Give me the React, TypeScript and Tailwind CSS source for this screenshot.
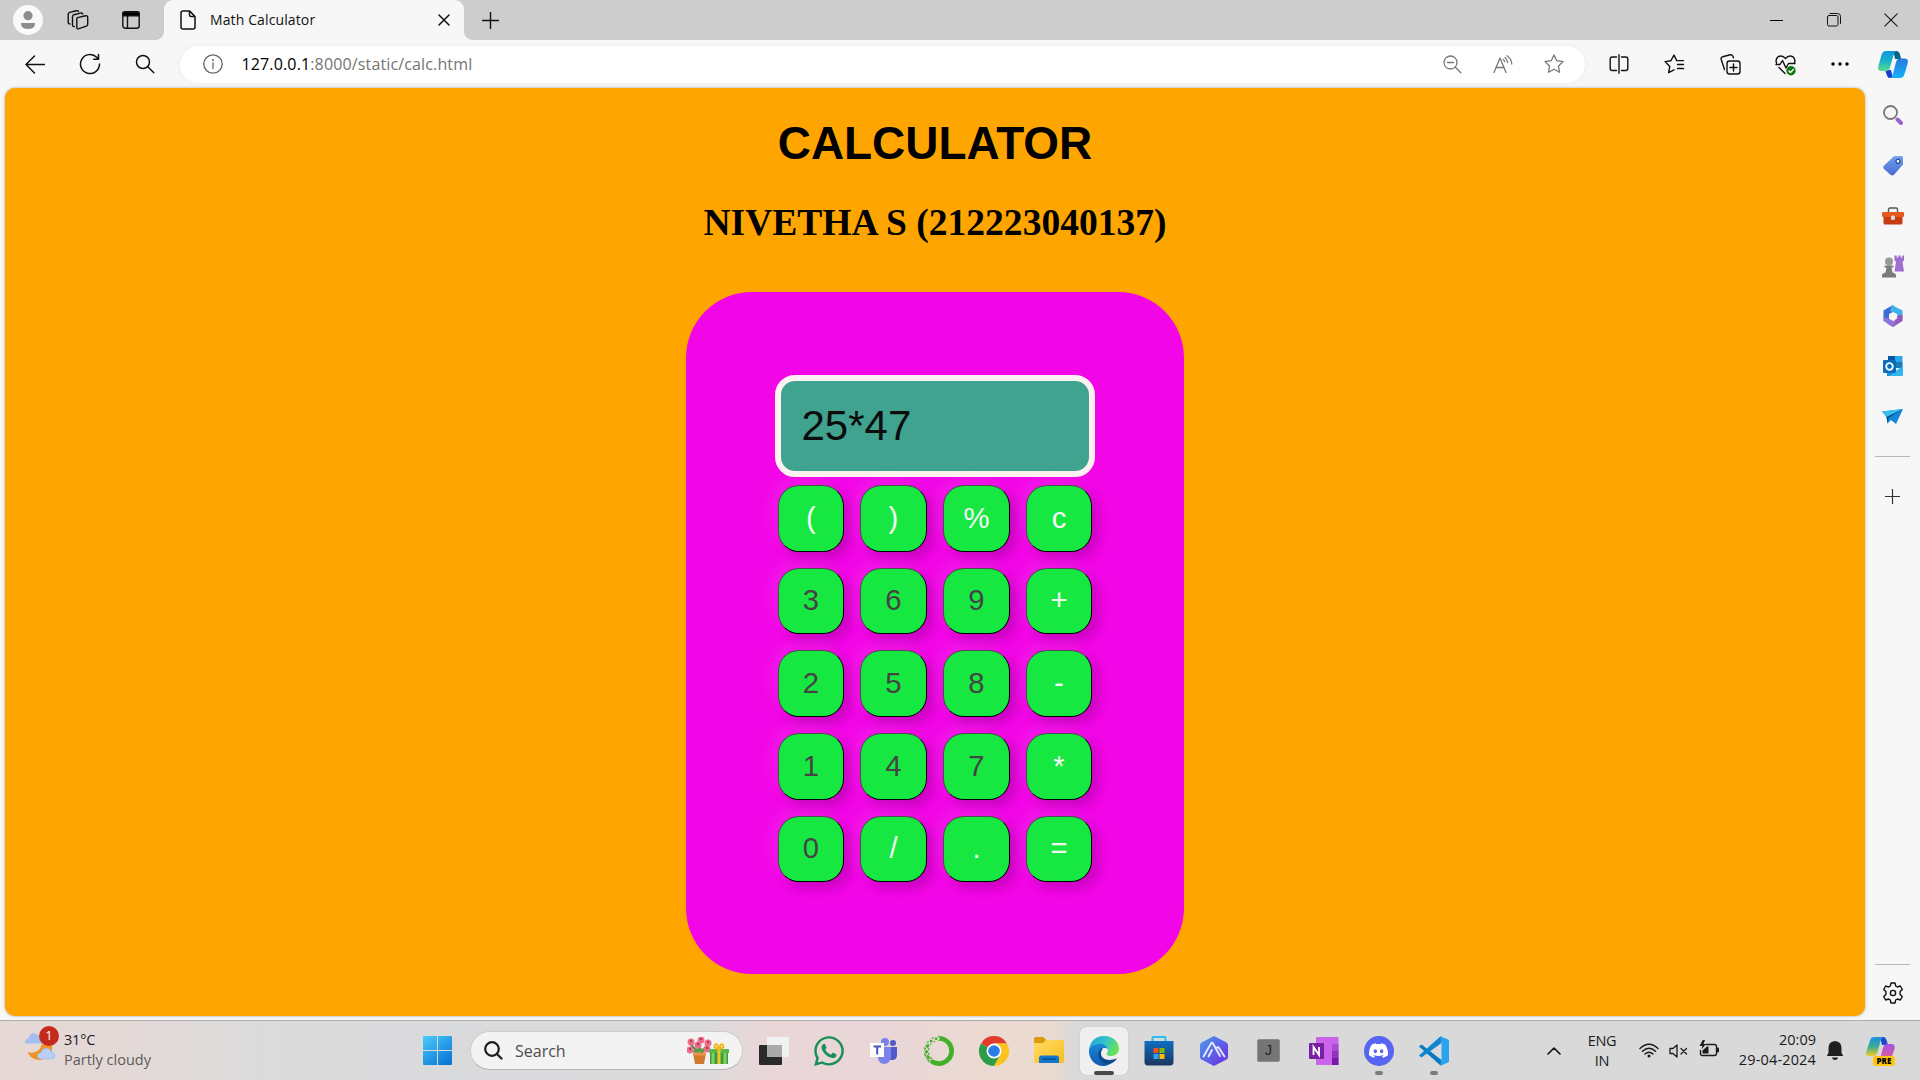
import type { ReactNode } from "react";
import { FaWhatsapp } from "react-icons/fa";
import { SiAnaconda, SiDiscord } from "react-icons/si";

function Slot({ className, children }: { className: string; children: ReactNode }) {
  return <div className={"flex shrink-0 items-center justify-center " + className}>{children}</div>;
}

type LineProps = { w: number; h: number; c?: string; sw?: number; children: ReactNode; className?: string };
function Line({ w, h, c = "#111", sw = 1.3, children, className }: LineProps) {
  return (
    <svg width={w} height={h} viewBox={`0 0 ${w} ${h}`} fill="none" stroke={c} strokeWidth={sw} strokeLinecap="round" strokeLinejoin="round" className={"block shrink-0 " + (className ?? "")}>
      {children}
    </svg>
  );
}

function Art({ w, h, children }: { w: number; h: number; children: ReactNode }) {
  return (
    <svg width={w} height={h} viewBox={`0 0 ${w} ${h}`} className="block shrink-0">
      {children}
    </svg>
  );
}

function TabStrip() {
  return (
    <div className="flex h-10 items-center bg-[#cdcdcd]">
      <Slot className="h-10 w-14">
        <Art w={30} h={30}>
          <circle cx="15" cy="15" r="15" fill="#f9f9f9" />
          <circle cx="15" cy="10.7" r="4.6" fill="#8d8d8d" />
          <path d="M8 18h14v.8c0 3.5-3 5.2-7 5.2s-7-1.700-7-5.200z" fill="#8d8d8d" />
        </Art>
      </Slot>
      <Slot className="h-10 w-[43px]">
        <Line w={22} h={22} sw={1.4}>
          <path d="M10.500 8.600 18.600 6.800Q20.700 6.400 20.700 8.300V15.200Q20.700 16.600 19.400 17.100L12 19.700Q9.800 20.400 9.800 18.400V9.800Q9.800 8.800 10.500 8.600Z" />
          <path d="M7.300 17.500Q5.500 17.800 5.500 16V7.500Q5.500 6.100 6.900 5.700L13.500 4.100Q15.200 3.700 15.700 5" />
          <path d="M3 15Q1.200 15 1.200 13.200V5.200Q1.200 3.800 2.600 3.400L9.200 1.700Q11 1.300 11.500 2.500" />
        </Line>
      </Slot>
      <Slot className="h-10 w-[63px]">
        <Line w={18} h={18} sw={1.4}>
          <rect x="0.800" y="0.800" width="16.400" height="16.400" rx="2.500" />
          <path d="M1 1.200h16v3.600h-16z" fill="#000" />
          <path d="M5.500 5v12" />
        </Line>
      </Slot>
      <div className="relative ml-0.5 flex h-10 w-[300px] items-center rounded-t-[9px] bg-[#f7f7f7]">
        <span className="absolute -left-2 bottom-0 h-2 w-2 bg-[radial-gradient(circle_at_0_0,#cdcdcd_7.500px,#f7f7f7_8px)]" />
        <span className="absolute -right-2 bottom-0 h-2 w-2 bg-[radial-gradient(circle_at_100%_0,#cdcdcd_7.500px,#f7f7f7_8px)]" />
        <Line w={16} h={20} sw={1.5} className="ml-4">
          <path d="M3 .9h6.500l5.500 5.600v10.600q0 2-2 2h-10q-2 0-2-2v-14.200q0-2 2-2zM9.500 1v4q0 1.600 1.600 1.600h3.900" />
        </Line>
        <span className="mb-0.5 ml-3.5 whitespace-nowrap font-['Open_Sans'] text-[14px] tracking-[0.120px] text-[#111]">Math Calculator</span>
        <Line w={12} h={12} sw={1.5} className="ml-auto mr-3.5">
          <path d="M1 1l10 10M11 1l-10 10" />
        </Line>
      </div>
      <Slot className="h-10 w-[53px]">
        <Line w={17} h={17} sw={1.4}><path d="M8.500.500v16M.500 8.500h16" /></Line>
      </Slot>
      <div className="ml-auto flex">
        <Slot className="h-10 w-[57.5px]"><Line w={13} h={13} sw={1}><path d="M0 6.500h13" stroke="#000" /></Line></Slot>
        <Slot className="h-10 w-[57.5px]">
          <Line w={14} h={14} sw={1}>
            <rect x=".5" y="2.500" width="10.500" height="10.500" rx="1.500" />
            <path d="M3 .5h7.500q3 0 3 3v7" />
          </Line>
        </Slot>
        <Slot className="h-10 w-[57.5px]"><Line w={14} h={14} sw={1.1}><path d="M.8.8l12.400 12.400M13.200.8l-12.400 12.400" /></Line></Slot>
      </div>
    </div>
  );
}

function CopilotMark() {
  return (
    <Art w={30} h={27}>
      <defs>
        <linearGradient id="cpA" x1="0" y1="0" x2="0" y2="1"><stop offset="0" stopColor="#1295e0" /><stop offset=".5" stopColor="#16b4c8" /><stop offset="1" stopColor="#5bdc8c" /></linearGradient>
        <linearGradient id="cpB" x1="0" y1="0" x2="0" y2="1"><stop offset="0" stopColor="#2a78dd" /><stop offset="1" stopColor="#14b2fa" /></linearGradient>
      </defs>
      <path d="M15 0h3.500q2.500 0 3.200 2.500l1.500 5.500h-6z" fill="#0a6285" />
      <path d="M7 19h6l2 8h-3q-2.500 0-3-2.500z" fill="#1540cf" />
      <path d="M8 0h10.500q-2 .5-2.800 3.500l-3.700 13q-.8 3.500-4 3.500H3.500Q-1 20 .5 14.500L3.500 4Q4.500 0 8 0z" fill="url(#cpA)" />
      <path d="M22 27h-10q2-.5 2.800-3.500l3.200-12.500q1-3.500 4-3.500h4.500Q31 7.500 29.500 13l-3 10q-1 4-4.500 4z" fill="url(#cpB)" />
    </Art>
  );
}

function Toolbar() {
  return (
    <div className="flex h-12 items-center bg-[#f7f7f7] pl-[7px]">
      <Slot className="w-[55px]"><Line w={20} h={19} sw={1.5}><path d="M1 9.500h18.500M9.500 1L1 9.500l8.500 8.500" /></Line></Slot>
      <Slot className="w-[55px]">
        <Line w={22} h={22} sw={1.5}><path d="M20.500 11a9.500 9.500 0 1 1-2.800-6.700l1.300 1.300M19.500 1.500v4.800h-4.800" /></Line>
      </Slot>
      <Slot className="w-[55px]"><Line w={20} h={20} sw={1.5}><circle cx="8" cy="8" r="6.500" /><path d="M12.800 12.800l6 6" /></Line></Slot>
      <div className="ml-2 flex h-[37px] w-[1405px] items-center rounded-full bg-white shadow-[0_0_5px_rgba(0,0,0,0.06)]">
        <Line w={20} h={20} c="#666" className="ml-[22.500px]">
          <circle cx="10" cy="10" r="9.200" /><path d="M10 9v5.500" /><circle cx="10" cy="6" r=".4" />
        </Line>
        <span className="ml-[19px] whitespace-nowrap font-['Open_Sans'] text-[16px] tracking-[0.140px] text-[#757575]"><span className="text-black">127.0.0.1</span>:8000/static/calc.html</span>
        <div className="ml-auto mr-[6px] flex">
          <Slot className="w-[50.5px]"><Line w={19} h={19} c="#777"><circle cx="7.500" cy="7.500" r="6.500" /><path d="M4.500 7.500h6M12.300 12.300l5.500 5.500" /></Line></Slot>
          <Slot className="w-[50.5px]">
            <Line w={20} h={19} c="#777"><path d="M1 17.500L7 3l6 14.500M3 12.500h8M12 2.500q2.300 1.600 2.600 5M14 .8q4.500 3 4.800 8.200M10.300 4.500q1 .8 1.300 2" /></Line>
          </Slot>
          <Slot className="w-[50.5px]">
            <Line w={20} h={20} c="#777"><path d="M10 1l2.700 5.700 6.300.9-4.500 4.400 1 6.300L10 15.300l-5.500 3 1-6.300L1 7.600l6.300-.9z" /></Line>
          </Slot>
        </div>
      </div>
      <div className="ml-[6.500px] flex items-center">
        <Slot className="w-[55px]">
          <Line w={20} h={20} sw={1.4}><path d="M7.500 3h-4.300q-2 0-2 2v9.500q0 2 2 2h4.300M10 .8v18.400M12.500 3h4.300q2 0 2 2v9.500q0 2-2 2h-4.300" /></Line>
        </Slot>
        <Slot className="w-[56px]">
          <Line w={21} h={20} sw={1.4}><path d="M10 15.800l-5.300 2.900 1.100-6.300L1 7.600l5.800-.8L10 1l2.700 5.600h6.800M13.500 10.500h6M13.500 14.500h6M8 17" /></Line>
        </Slot>
        <Slot className="w-[55px]">
          <Line w={21} h={21} sw={1.4}>
            <rect x="7" y="7" width="13" height="13" rx="2.500" /><path d="M13.500 10v7M10 13.500h7M4.500 15.500l-3.300-10q-.6-2.200 1.500-2.800l7.500-1.900q2-.4 2.700 1.400l.5 1.600" />
          </Line>
        </Slot>
        <Slot className="w-[55px]">
          <Line w={21} h={21} sw={1.4} className="mt-0.5">
            <path d="M1.500 8Q.2 4 3 1.900Q7-.5 10.500 3.500Q14-.5 18 1.900Q20.800 4 19.500 8M1 9.500h4l2.500-4 3.500 7.500 2.500-4.500h6.500M4 12.500l6 6" />
            <circle cx="16" cy="15.800" r="4.700" fill="#0e7a0d" stroke="none" />
            <path d="M14 16l1.500 1.500 2.800-3" stroke="#fff" />
          </Line>
        </Slot>
        <Slot className="w-[55px]">
          <Art w={18} h={4}><circle cx="2" cy="2" r="1.700" /><circle cx="9" cy="2" r="1.700" /><circle cx="16" cy="2" r="1.700" /></Art>
        </Slot>
        <Slot className="w-[51px]"><CopilotMark /></Slot>
      </div>
    </div>
  );
}

const KEYS = ["(", ")", "%", "c", "3", "6", "9", "+", "2", "5", "8", "-", "1", "4", "7", "*", "0", "/", ".", "="];

function Calculator() {
  return (
    <div className="flex h-[682px] w-[498px] flex-col items-center rounded-[66px] bg-[#f205e6] pt-[83px]">
      <div className="flex h-[102px] w-[320px] items-center rounded-[20px] border-[6px] border-[#fdf1f1] bg-[#3fa38f] pl-[20.500px] font-['Liberation_Sans'] text-[42px] leading-none text-[#0c0c0c]">
        <span>25*47</span>
      </div>
      <div className="mt-2 grid grid-cols-[66px_67px_67px_66px] grid-rows-[67px_66px_67px_67px_66px] gap-4">
        {KEYS.map((k) => (
          <button
            key={k}
            className={
              "rounded-[21px] border border-b-black border-l-[#4c4c4c] border-r-black border-t-[#4c4c4c] bg-[#17e841] pb-0.5 text-center font-['Liberation_Sans'] text-[29.300px] leading-none shadow-[-6px_-6px_16px_rgba(255,255,255,0.09),6px_6px_12px_rgba(0,0,0,0.18)] " +
              (/[0-9]/.test(k) ? "text-[#444]" : "text-[#f5f5f5]")
            }
          >
            {k}
          </button>
        ))}
      </div>
    </div>
  );
}

function Page() {
  return (
    <main className="ml-[5px] flex h-[927.500px] w-[1860px] flex-col items-center rounded-[10px] bg-[#ffa500] pt-[29px] text-black shadow-[0_0_3px_rgba(0,0,0,0.35)]">
      <h1 className="font-['Liberation_Sans'] text-[45.900px] font-bold leading-[52px]">CALCULATOR</h1>
      <h2 className="mt-[31px] font-['Liberation_Serif'] text-[37.550px] font-bold leading-[45px]">NIVETHA S (212223040137)</h2>
      <div className="mt-[47px]"><Calculator /></div>
    </main>
  );
}

function SideBar() {
  return (
    <aside className="flex w-[55px] flex-col items-center">
      <Slot className="mt-[2px] h-[50px]">
        <Art w={20} h={20}>
          <circle cx="7.500" cy="7.500" r="6.500" fill="none" stroke="#777" strokeWidth="1.800" />
          <path d="M14.500 14.500l3.500 3.500" stroke="#9a5fd0" strokeWidth="4" strokeLinecap="round" />
        </Art>
      </Slot>
      <Slot className="h-[51px]">
        <Art w={20} h={20}>
          <defs><linearGradient id="tg" x1="0" y1="0" x2="0" y2="1"><stop offset="0" stopColor="#6ea2ee" /><stop offset="1" stopColor="#4a6bd0" /></linearGradient></defs>
          <path d="M11 .3l7.500-.3q1.500 0 1.500 1.500v7L11 18.800q-1.800 1.500-3.500 0L1 13q-1.500-1.700 0-3.500z" fill="url(#tg)" />
          <circle cx="15" cy="5.300" r="2" fill="#fff" stroke="#2b438e" strokeWidth="1.200" />
        </Art>
      </Slot>
      <Slot className="h-[50px]">
        <Art w={22} h={18}>
          <path d="M6.500 5V2.500q0-1.500 1.500-1.500h6q1.500 0 1.500 1.500V5" fill="none" stroke="#555" strokeWidth="1.400" />
          <path d="M1.500 9h19v7q0 1.500-1.500 1.500H3q-1.500 0-1.500-1.500z" fill="#c43c12" />
          <rect x="0" y="5" width="22" height="5" rx="1" fill="#e65a22" />
          <rect x="9" y="8.500" width="4" height="4.500" rx="1.500" fill="#d8d8d8" />
        </Art>
      </Slot>
      <Slot className="h-[50px]">
        <Art w={22} h={23}>
          <path d="M12.500.5h2.300v2h1.500V.5h2.400v2h1.500V.5H22v5l-1.500 1.300 1 6.500.5 3.200h-9.500l.5-3.200 1-6.500-1.500-1.300z" fill="#a06fd4" />
          <circle cx="7" cy="6.500" r="4" fill="#999" />
          <path d="M2.500 10.500h9v2h-2l1 5q3.500.8 3.500 3v2H0v-2q0-2.200 3.500-3l1-5h-2z" fill="#7b7b7b" />
        </Art>
      </Slot>
      <Slot className="h-[50px]">
        <Art w={20} h={22}>
          <path d="M10 0L.5 5.500v10L6 19l.500-9L13 6z" fill="#3d6bd3" />
          <path d="M9 0l10.500 5.500V14L14 9.500 7 6z" fill="#3fb2ee" />
          <path d="M19.500 10v6L10 22l-6-3.500 7-2 4-6.500z" fill="#9459ba" />
          <path d="M.5 12v4L10 22l3-5.500-6-2.500z" fill="#8c77d8" />
          <path d="M10 7l4 2v4.500L10 16l-4-2.500V9z" fill="#f7f7f7" />
        </Art>
      </Slot>
      <Slot className="h-[50px]">
        <Art w={20} h={20}>
          <rect x="5" y="0" width="14.500" height="12" rx="1" fill="#28a8ea" />
          <path d="M5 0h7v6H5z" fill="#0358a7" /><path d="M12 6h7.500v6H12z" fill="#14447d" opacity=".45" />
          <path d="M4 10l9 5 7-5v9q0 1-1 1H4z" fill="#1490df" /><path d="M20 10v9q0 1-1 1H6z" fill="#32b6ee" />
          <rect x="0" y="4" width="13" height="13" rx="1.200" fill="#0a6cbd" />
          <circle cx="6.500" cy="10.500" r="3.300" fill="none" stroke="#fff" strokeWidth="1.800" />
        </Art>
      </Slot>
      <Slot className="h-[50px]">
        <Art w={21} h={15}>
          <path d="M0 2.500L21 0 14 15l-5-4-3.500 3.500L4.500 8z" fill="#1488d8" />
          <path d="M0 2.500L21 0 4.500 8z" fill="#37bff2" />
          <path d="M21 0L6.500 9l-1 5.500L4.500 8z" fill="#0b4e86" />
        </Art>
      </Slot>
      <div className="mt-[15px] h-px w-[35px] bg-[#b9b9b9]" />
      <Slot className="mt-8 h-[15px]"><Line w={15} h={15} c="#333" sw={1.2}><path d="M7.500.5v14M.5 7.500h14" /></Line></Slot>
      <div className="mt-auto h-px w-[35px] bg-[#b9b9b9]" />
      <Slot className="mb-4 mt-[17px] h-[22px]">
        <Line w={22} h={22} sw={1.4}>
          <path d="M9 1h4l.7 3 1.700 1 2.900-1 2 3.500-2.200 2.100v2.800l2.200 2.100-2 3.500-2.900-1-1.700 1-.7 3H9l-.7-3-1.700-1-2.900 1-2-3.500 2.200-2.100V9.600L1.700 7.500l2-3.500 2.900 1 1.700-1z" />
          <circle cx="11" cy="11" r="2.600" />
        </Line>
      </Slot>
    </aside>
  );
}

function WeatherArt() {
  return (
    <div className="relative h-[34px] w-[34px]">
      <Art w={34} h={34}>
        <path d="M0 16.500q0-3.500 3.500-4Q5 6.500 10 7.500q4 1 4.500 4.500l4 5.500H2q-2-.2-2-1z" fill="#a3bfef" />
        <path d="M27 18q2 14-12 16Q6 34 2.500 26q5 1.500 9-.5t5-7z" fill="#f0932b" />
        <path d="M12.500 30q0-3 3.500-3.500 1.500-5 6-4.200 4 .7 4.700 4 3.300.3 3.300 3.500 0 3.200-3.500 3.200H16q-3.500 0-3.500-3z" fill="#b9cff5" stroke="#8dabe6" strokeWidth=".5" />
      </Art>
      <span className="absolute left-[14px] top-0 flex h-5 w-5 items-center justify-center rounded-full bg-[#c42b1c] font-['Open_Sans'] text-[13px] text-white">1</span>
    </div>
  );
}

function FlowersArt() {
  const blooms = [[4, 5], [14, 3], [21, 6], [3, 13], [11, 8], [20, 12]];
  return (
    <Art w={42} h={28}>
      <path d="M13 17L4 8M13 17L13 5M13 17l7-9" stroke="#47883f" strokeWidth="2" />
      <ellipse cx="12" cy="14" rx="6" ry="3" fill="#5a9c4c" />
      {blooms.map(([x, y]) => (<g key={x + y * 50}><circle cx={x} cy={y} r="3.500" fill="#ee6f8d" /><circle cx={x} cy={y - 1} r="1.200" fill="#b8354f" /></g>))}
      <path d="M6 16h13l-2 11H8z" fill="#d27a2e" /><path d="M6 15.500h13v3H6z" fill="#e8944a" />
      <path d="M22 12h20v4H22z" fill="#57b847" /><path d="M23 16h18v11H23z" fill="#3e9d38" />
      <path d="M26 16v11M38 16v11" stroke="#80d066" strokeWidth="3" />
      <path d="M32 12v15" stroke="#f7c62f" strokeWidth="3" />
      <path d="M32 12q-6-1-4-4t4 4q2-7 4-4t-4 4" fill="none" stroke="#f0b71e" strokeWidth="2" />
    </Art>
  );
}

function TaskViewArt() {
  return (
    <Art w={30} h={28}>
      <rect x="0" y="8" width="23" height="20" rx="1" fill="#2a2a2a" />
      <rect x="8" y="0" width="22" height="20" rx="1" fill="#f2f2f2" />
      <path d="M8 8h15v12H8z" fill="#aaa" />
    </Art>
  );
}

function TeamsArt() {
  return (
    <Art w={27} h={28}>
      <circle cx="15" cy="5" r="4" fill="#7b83eb" /><circle cx="23" cy="6" r="3" fill="#5059c9" />
      <path d="M17 10h10v8q0 5-5 5h-5z" fill="#5059c9" />
      <path d="M8 10h13v10q-1 7-7 7-6-1-6-7z" fill="#7b83eb" />
      <rect x="0" y="6" width="14" height="14" fill="#fff" />
      <path d="M3.500 9.500h7.500M7.200 9.500v8" stroke="#4b53bc" strokeWidth="2" />
    </Art>
  );
}

function ChromeArt() {
  return (
    <Art w={30} h={30}>
      <path d="M15 15L2 7.500A15 15 0 0 1 28 7.500H15z" fill="#e33b2e" />
      <path d="M15 15L2 7.500A15 15 0 0 0 15 30l6.500-11.200z" fill="#2b9d48" />
      <path d="M15 7.500h13A15 15 0 0 1 15 30l6.500-11.200z" fill="#fcc31e" />
      <circle cx="15" cy="15" r="7.500" fill="#fff" /><circle cx="15" cy="15" r="5.800" fill="#2a7de9" />
    </Art>
  );
}

function FolderArt() {
  return (
    <Art w={30} h={27}>
      <defs><linearGradient id="fo" x1="0" y1="0" x2="1" y2="1"><stop offset="0" stopColor="#ffdc65" /><stop offset="1" stopColor="#fbbc1c" /></linearGradient></defs>
      <path d="M0 1.500Q0 0 1.500 0H9l3.500 3H30v6H0z" fill="#dc9a0b" />
      <path d="M0 6h9l3-3h18v21.500q0 1.500-1.500 1.500h-27Q0 26 0 24.500z" fill="url(#fo)" />
      <path d="M5 26v-5q0-2.500 2.500-2.500h15q2.500 0 2.500 2.500v5z" fill="#1378cb" />
      <path d="M8.500 22h13" stroke="#074d8d" strokeWidth="1.500" />
    </Art>
  );
}

function EdgeArt() {
  return (
    <Art w={30} h={30}>
      <defs>
        <linearGradient id="eg1" x1="0" y1="0" x2="1" y2=".4"><stop offset="0" stopColor="#1fa0dc" /><stop offset=".6" stopColor="#36c5c4" /><stop offset="1" stopColor="#65e25a" /></linearGradient>
        <linearGradient id="eg2" x1="0" y1="0" x2="0" y2="1"><stop offset="0" stopColor="#1c86d8" /><stop offset="1" stopColor="#0f5bad" /></linearGradient>
      </defs>
      <path d="M0 14C1 5 7 0 15 0c9 0 15 6 15 12.500C30 17 26.500 20 22 20c-4 0-5-1.500-4-3 2.500-3 0-7-5.500-7C7 10 2 12 0 14z" fill="url(#eg1)" />
      <path d="M0 14c1.500-4 6-6 11-6 4 0 7 2 7.500 5-2-2-8-1-8 5 0 6 5 10 10 10 -2 1.500-4 2-6 2C6 30-.5 23 0 14z" fill="url(#eg2)" />
      <path d="M12 12.500c-6 6-1 16 8 15.800 4-1 7-4 8-6-8 3.500-16 1-16-4.800 0-2 .5-3.500 2-4.800z" fill="#0c4a8c" />
    </Art>
  );
}

function StoreArt() {
  return (
    <Art w={30} h={30}>
      <defs><linearGradient id="st" x1="0" y1="0" x2="0" y2="1"><stop offset="0" stopColor="#0f6fc0" /><stop offset="1" stopColor="#1b3560" /></linearGradient></defs>
      <path d="M8.500 6V2q0-1 1-1h11q1 0 1 1v4" fill="none" stroke="#28bdf0" strokeWidth="2" />
      <path d="M.5 5h29v21q0 3.500-3.500 3.500H4Q.5 29.500.5 26z" fill="url(#st)" />
      <path d="M9.500 12h5v5h-5z" fill="#f25022" /><path d="M15.500 12h5v5h-5z" fill="#7fba00" />
      <path d="M9.500 18h5v5h-5z" fill="#2aa5ec" /><path d="M15.500 18h5v5h-5z" fill="#ffb900" />
    </Art>
  );
}

function PeakArt() {
  return (
    <Art w={28} h={30}>
      <defs><linearGradient id="pk" x1="0" y1="0" x2="1" y2="1"><stop offset="0" stopColor="#4b9bea" /><stop offset="1" stopColor="#7029e8" /></linearGradient></defs>
      <path d="M14 0l12.500 6.500Q28 7.500 28 9v12q0 1.500-1.500 2.500L14 30 1.500 23.500Q0 22.500 0 21V9q0-1.500 1.500-2.500z" fill="url(#pk)" />
      <path d="M3.500 20.500L11 7.500q1-1.500 2 0l7 12.500M8.500 20.500l3.500-6.500M17 11.500q1-1 2 .5l5.500 8.500" fill="none" stroke="#e6ecff" strokeWidth="1.900" strokeLinecap="round" />
    </Art>
  );
}

function OneNoteArt() {
  return (
    <Art w={30} h={28}>
      <rect x="7" y="0" width="22.500" height="28" rx="1" fill="#ca64ea" />
      <path d="M23 7h6.500v7h-6.500z" fill="#ae4bd5" /><path d="M23 14h6.500v7h-6.500z" fill="#9332bf" /><path d="M23 21h6.500v7h-6.500z" fill="#7719aa" />
      <rect x="0" y="6" width="15" height="16" rx="1" fill="#7b1fa2" />
      <path d="M4.500 18v-8l5.500 8v-8" fill="none" stroke="#fff" strokeWidth="1.800" />
    </Art>
  );
}

function CodeArt() {
  return (
    <Art w={30} h={30}>
      <path d="M0 10.500L2.500 8.500l20 15.500v5L21 29z" fill="#0a79c4" />
      <path d="M0 19.500l2.500 2L22.500 7V1L21 .8z" fill="#0f86d1" />
      <path d="M21 0l8 3.500q1 .5 1 1.500v20q0 1-1 1.500L21 30l1.500-5V6z" fill="#2aa3ef" />
    </Art>
  );
}

const APPS: { id: string; art: ReactNode; mark?: "active" | "open" }[] = [
  { id: "taskview", art: <TaskViewArt /> },
  { id: "whatsapp", art: <FaWhatsapp size={34} color="#1a8f55" /> },
  { id: "teams", art: <TeamsArt /> },
  { id: "anaconda", art: <SiAnaconda size={30} color="#43b02a" /> },
  { id: "chrome", art: <ChromeArt /> },
  { id: "folder", art: <FolderArt /> },
  { id: "edge", art: <EdgeArt />, mark: "active" },
  { id: "store", art: <StoreArt /> },
  { id: "peak", art: <PeakArt /> },
  { id: "j", art: <span className="flex h-[23px] w-[23px] items-center justify-center rounded-[2px] border border-[#8c8c8c] bg-[#757575] font-['Liberation_Sans'] text-[14px] text-[#222]">J</span> },
  { id: "onenote", art: <OneNoteArt /> },
  { id: "discord", art: <span className="flex h-[30px] w-[30px] items-center justify-center rounded-full bg-[#5865f2]"><SiDiscord size={19} color="#fff" /></span>, mark: "open" },
  { id: "code", art: <CodeArt />, mark: "open" },
];

function TaskBar() {
  return (
    <footer className="flex h-[60px] items-center border-t border-[#acacac] bg-[linear-gradient(90deg,#e6d8d5_0px,#e3d9d7_130px,#dbdbdc_270px,#d9dadc_450px,#dadadb_700px,#e9d7d8_760px,#e9d6d8_880px,#ebdad1_990px,#eadad0_1050px,#d9d9d9_1080px,#d9d9da_1920px)] font-['Open_Sans'] text-[#1b1b1b]">
      <div className="mb-1 ml-[25px] flex h-[34px] w-[398px] items-center">
        <div className="-mt-3"><WeatherArt /></div>
        <div className="ml-[5px] mt-0.5 text-[14.500px] leading-5">
          <p className="tracking-[-0.200px]">31°C</p>
          <p className="whitespace-nowrap text-[#5d5a59]">Partly cloudy</p>
        </div>
      </div>
      <Art w={29} h={29}>
        <defs><linearGradient id="wn" gradientUnits="userSpaceOnUse" x1="0" y1="0" x2="22" y2="29"><stop offset="0" stopColor="#4ccbfb" /><stop offset="1" stopColor="#0a78d5" /></linearGradient></defs>
        <path d="M1 0h13v14H0V1q0-1 1-1zM15 0h13q1 0 1 1v13H15zM0 15h14v14H1q-1 0-1-1zM15 15h14v13q0 1-1 1H15z" fill="url(#wn)" />
      </Art>
      <div className="ml-[18px] flex h-[39px] w-[273px] items-center rounded-full border border-b-[#b5b5b5] border-l-[#ccc] border-r-[#ccc] border-t-[#ccc] bg-[#f3f3f3]">
        <Line w={19} h={19} sw={2.200} c="#1d1d1d" className="ml-[13px]"><circle cx="8" cy="8" r="6.800" /><path d="M13 13l4.500 4.500" /></Line>
        <span className="ml-[12px] text-[16px] text-[#4c4c4c]">Search</span>
        <div className="ml-auto mr-[13px]"><FlowersArt /></div>
      </div>
      <div className="ml-[3px] flex">
        {APPS.map((a) => (
          <div key={a.id} className="relative flex h-[59px] w-[55px] items-center justify-center">
            <div className={a.mark === "active" ? "flex h-[48px] w-[48px] items-center justify-center rounded-md bg-[#efefef] shadow-[0_0_1px_rgba(0,0,0,0.3)]" : "flex h-[48px] w-[48px] items-center justify-center"}>{a.art}</div>
            {a.mark === "active" && <span className="absolute bottom-[5px] h-1 w-5 rounded-full bg-[#4a4a4a]" />}
            {a.mark === "open" && <span className="absolute bottom-[5px] h-1 w-2 rounded-full bg-[#7b7b7b]" />}
          </div>
        ))}
      </div>
      <div className="ml-auto flex items-center">
        <Line w={14} h={8} sw={1.600}><path d="M1 7l6-6 6 6" /></Line>
        <div className="ml-[26px] w-[30px] text-center text-[14.500px] leading-5 tracking-[-0.3px]"><p>ENG</p><p>IN</p></div>
        <Line w={20} h={15} sw={1.500} c="#1b1b1b" className="ml-[22px]">
          <path d="M1 5.500q9-8.500 18 0M3.500 8.300q6.500-6 13 0M6 11q4-3.600 8 0" /><circle cx="10" cy="13" r="1.500" fill="#1b1b1b" stroke="none" />
        </Line>
        <Line w={19} h={14} c="#1b1b1b" className="ml-[10px]"><path d="M8 1v12L4 9.500H1v-5h3zM12 4.500l5.500 5.500M17.500 4.500L12 10" /></Line>
        <Line w={20} h={17} sw={1.400} c="#1b1b1b" className="mb-1 ml-[11px]">
          <path d="M7 4.500h8.500q2 0 2 2v7q0 2-2 2h-12q-2 0-2-2v-3" /><path d="M3.500 13.500v-3L8 6.500h1.500v7z" fill="#1b1b1b" stroke="none" />
          <path d="M3.800 0L.5 6h3L2.500 9.500 7 4H4.500L6 0z" fill="#1b1b1b" stroke="none" /><path d="M19 8.500v3" strokeWidth="2" />
        </Line>
        <div className="mb-0.5 ml-[17px] w-[80px] whitespace-nowrap text-right text-[14.500px] leading-5"><p>20:09</p><p className="tracking-[0.150px]">29-04-2024</p></div>
        <div className="ml-[11px]">
          <Art w={16} h={19}><path d="M8 0q6.500.5 6.500 7v5l1.500 2.500v.5H0v-.5L1.500 12V7Q1.500.5 8 0zM5 16.500h6q-.5 2.500-3 2.500t-3-2.500z" fill="#1f1f1f" /></Art>
        </div>
        <div className="relative ml-[23px] mr-[24px] h-[28px] w-[30px]">
          <Art w={29} h={26}>
            <defs>
              <linearGradient id="c1" x1="0" y1="0" x2="0" y2="1"><stop offset="0" stopColor="#1c8fe8" /><stop offset=".5" stopColor="#37ad94" /><stop offset="1" stopColor="#f3cb27" /></linearGradient>
              <linearGradient id="c2" x1="0" y1="0" x2="0" y2="1"><stop offset="0" stopColor="#a552e8" /><stop offset="1" stopColor="#f3617c" /></linearGradient>
            </defs>
            <path d="M14 0h3.500q2 0 3 3l1.500 5h-6z" fill="#1c4bc9" />
            <path d="M8 0h9.500q-2 .5-3 4l-3 11q-1 4-4 4H3.500Q-1 19 .5 14L4 3.500Q5 0 8 0z" fill="url(#c1)" />
            <path d="M21 26H11q2-1 3-4l3-11q1-4 4-4h4.500Q29.500 7 28.500 12L25 22.500q-1 3.500-4 3.500z" fill="url(#c2)" />
          </Art>
          <span className="absolute -bottom-px left-[7px] flex h-[10px] w-[22px] items-center justify-center rounded-[3px] bg-[#ffc60a] text-[8px] font-extrabold leading-none text-black">PRE</span>
        </div>
      </div>
    </footer>
  );
}

export default function App() {
  return (
    <div className="flex h-[1080px] w-[1920px] flex-col overflow-hidden bg-[#f7f7f7]">
      <TabStrip />
      <Toolbar />
      <div className="flex h-[932px] items-stretch">
        <Page />
        <SideBar />
      </div>
      <TaskBar />
    </div>
  );
}
